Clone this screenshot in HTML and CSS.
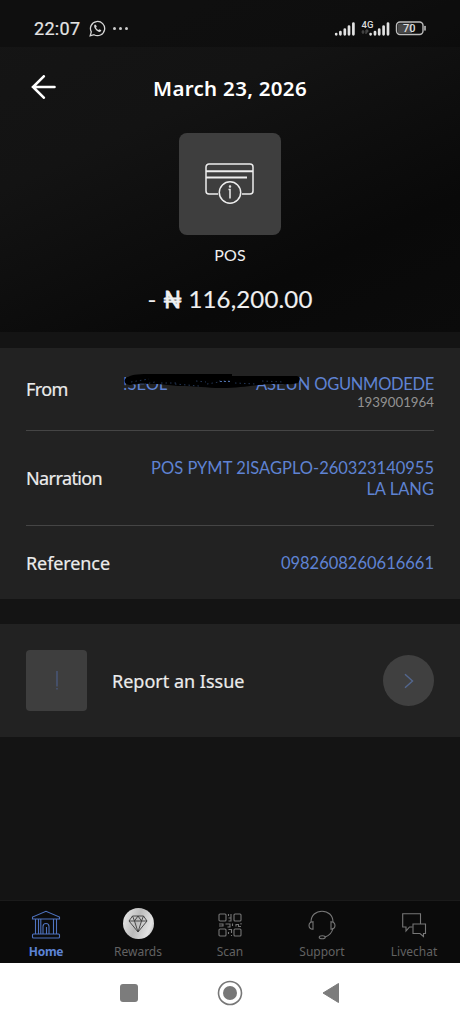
FILE: index.html
```html
<!DOCTYPE html>
<html lang="en">
<head>
<meta charset="utf-8">
<title>Transaction details</title>
<link rel="stylesheet" href="styles.css">
</head>
<body>
<div class="screen">
  <section class="top">
    <div class="status">
      <span class="clock">22:07</span>
      <svg class="whatsapp" width="17" height="17" viewBox="0 0 17 17" fill="none" stroke="#d6d6d6" stroke-width="1.3"><path d="M1.2 15.8l1.1-3.9A7.1 7.1 0 1 1 5 14.7z"/><path d="M5.5 4.8c-1.7 2.2 2.8 7.9 5.9 7l1-1.5-2-1.1-1 .8c-1.2-.4-2-1.4-2.4-2.4l.8-.9-.9-2z" fill="#d6d6d6" stroke="none"/></svg>
      <span class="dots"><i></i><i></i><i></i></span>
      <svg class="signals" width="93" height="20" viewBox="0 0 93 20">
        <g fill="none" stroke="#e2e2e2" stroke-width="2.7" stroke-linecap="round"><path d="M2.2 15v.3M6.4 13v2.3M10.8 10.5v4.8M15 7.5v7.8M19.4 4.5v10.8"/><path d="M36.6 15v.3M41 13v2.3M45.2 10.5v4.8M49.6 7.5v7.8M54 4.5v10.8"/></g>
        <text class="net" x="27.5" y="8.5">4G</text>
        <path d="M29 11v4M27.5 13h3M32 15v-4h1.800v2H32" stroke="#555" fill="none"/>
        <rect x="62.5" y="3" width="26.5" height="12.5" rx="3.5" fill="none" stroke="#bdbdbd" stroke-width="1.4"/>
        <path d="M64 4.5h14v9.500H64z" fill="#484848"/>
        <path d="M91 7.5v3.5" stroke="#bdbdbd" stroke-width="1.6" stroke-linecap="round"/>
        <text class="charge" x="69" y="13.3">70</text>
      </svg>
    </div>
    <header class="title">
      <svg width="25" height="24" viewBox="0 0 25 24" fill="none" stroke="#fff" stroke-width="2.6" stroke-linecap="round"><path d="M12.800 1.300L2 12l10.800 10.700M2 12h21.500"/></svg>
      <h1>March 23, 2026</h1>
    </header>
    <div class="tile">
      <svg width="50" height="42" viewBox="0 0 50 42" fill="none" stroke="#ededed" stroke-width="1.5"><path d="M13 31H4a3 3 0 0 1-3-3V4a3 3 0 0 1 3-3h41a3 3 0 0 1 3 3v24a3 3 0 0 1-3 3h-8"/><path d="M1 8.300h47M1 14.600h41" stroke-width="2"/><circle cx="25" cy="29.5" r="10.7"/><path d="M23.500 26.500H25v9"/><circle cx="25" cy="23.5" r=".5"/></svg>
    </div>
    <p class="kind">POS</p>
    <p class="amount"><span>-</span> <span class="naira">₦</span> <span>116,200.00</span></p>
  </section>

  <section class="details">
    <div class="row from">
      <span class="label l-from">From</span>
      <div class="value">
        <p class="name"><span class="lead">!SEOL</span><span class="given">ASEUN</span> <span class="family">OGUNMODEDE</span>
          <svg class="scribble" width="180" height="20" viewBox="0 0 180 20"><path d="M5 3c5-3 12-3 24-3h80v2h65c4 1 3 4 1 7-6 2-15 1-30 1-15 1-26 4-47 4-15 0-24-2-43-2l-20-2c-10 0-18-1-28 1-6 0-7-5-3-8z" fill="#000"/><path d="M8 8l18-3M17 11l15-3M38 9h18M52 10l24 2M73 7l10 1M84 10l12-2M96 7h13M112 9l21 1M139 7l22 1" stroke="#243655" stroke-dasharray="1.5 3" fill="none"/><path d="M97 7.500h12" stroke="#4d6ea8" stroke-dasharray="2 2"/></svg>
        </p>
        <p class="account">1939001964</p>
      </div>
    </div>
    <div class="row narration">
      <span class="label l-narr">Narration</span>
      <p class="value"><span class="n1">POS PYMT 2ISAGPLO-260323140955</span><br><span class="n2">LA LANG</span></p>
    </div>
    <div class="row reference">
      <span class="label l-ref">Reference</span>
      <p class="value ref">0982608260616661</p>
    </div>
  </section>

  <section class="report">
    <div class="alert"><svg width="4" height="22" viewBox="0 0 4 22"><path d="M2 1v15.500M2 18v1.500" stroke="#4a5a80" stroke-width="1.3"/></svg></div>
    <span class="label l-report">Report an Issue</span>
    <div class="go"><svg width="10" height="16" viewBox="0 0 10 16" fill="none" stroke="#53678f" stroke-width="1.4"><path d="M1 1.200l7.500 6.800L1 14.800"/></svg></div>
  </section>

  <nav class="tabs">
    <div class="tab active">
      <span class="icon"><svg width="30" height="30" viewBox="0 0 30 30" fill="none" stroke="#4f73bf" stroke-width="1.1"><path d="M1.500 9V7L15 1.300 28.500 7v2zM4.500 9v15M7.500 9v15M22.500 9v15M25.500 9v15M9.800 9v15M12 24v-7.500a3 3 0 0 1 6 0V24M15.500 17v7"/><rect x="1.5" y="24" width="27" height="4" rx="1"/></svg></span>
      <span class="t-home">Home</span>
    </div>
    <div class="tab">
      <span class="icon"><span class="coin"><svg width="20" height="18" viewBox="0 0 20 18" fill="none" stroke="#3c3c3c" stroke-width=".9"><path d="M4.500 1h11L19 6l-9 11L1 6zM1 6h18M4.500 1l2 5L10 17l3.500-11 2-5M6.500 6L10 1l3.500 5"/></svg></span></span>
      <span class="t-rewards">Rewards</span>
    </div>
    <div class="tab">
      <span class="icon"><svg width="24" height="24" viewBox="0 0 24 24" fill="none" stroke="#777" stroke-width="1.1"><rect x="1" y="1" width="7" height="7" rx="1"/><rect x="16" y="1" width="7" height="7" rx="1"/><rect x="1" y="16" width="7" height="7" rx="1"/><rect x="16" y="16" width="7" height="7" rx="1"/><path d="M10.500 1v2M10.500 5H13V1M13 5v3h-2.500M1 11h4v2H1M7.500 11H12v3H9.500M14.500 10.500V13M18 13.500v-2h2.500v2H23M23 10v1.500M10.500 16.500h3M13.500 16v4M10.500 19V21M13.500 22v1"/></svg></span>
      <span class="t-scan">Scan</span>
    </div>
    <div class="tab">
      <span class="icon"><svg width="28" height="30" viewBox="0 0 28 30" fill="none" stroke="#777" stroke-width="1.1"><path d="M3 12C3 5 8 1.200 14 1.200S25 5 25 12M25 18c-.8 4.500-3.500 7.500-8 9"/><path d="M5 11.700v7.500c-5.300-.3-5.300-7.200 0-7.500zM23 11.700v7.500c5.300-.3 5.300-7.200 0-7.500z"/><ellipse cx="14.2" cy="27.3" rx="3" ry="1.5"/></svg></span>
      <span class="t-support">Support</span>
    </div>
    <div class="tab">
      <span class="icon"><svg width="26" height="26" viewBox="0 0 26 26" fill="none" stroke="#777" stroke-width="1.1"><path d="M11.500 15H8.500L5 19v-4H1.700V1.700h17.800V12"/><path d="M12 12h12.500v9.500h-2v3l-3.500-3h-7z"/></svg></span>
      <span class="t-live">Livechat</span>
    </div>
  </nav>
  <footer class="system">
    <svg width="18" height="18"><rect width="18" height="18" rx="3" fill="#7c7c7c"/></svg>
    <svg width="26" height="26" fill="none" stroke="#777"><circle cx="13" cy="13" r="11.5" stroke-width="1.6"/><circle cx="13" cy="13" r="7" fill="#777" stroke="none"/></svg>
    <svg width="18" height="22"><path d="M1 11L16.500 1.500v19z" fill="#7c7c7c" stroke="#7c7c7c" stroke-linejoin="round"/></svg>
  </footer>
</div>
</body>
</html>
```
FILE: styles.css
```css
* { box-sizing: border-box; }
body { margin: 0; background: #141414; color: #f0f0f0; font-family: Lato, "Noto Sans", sans-serif; }
p, h1 { margin: 0; white-space: nowrap; }
svg { display: block; flex: none; }
span { white-space: nowrap; }
.screen { width: 460px; height: 1024px; display: flex; flex-direction: column; overflow: hidden; background: #141414; }

.top { height: 332px; flex: none; display: flex; flex-direction: column; align-items: center; background: linear-gradient(155deg, #151515 0%, #131313 35%, #090909 75%, #0b0b0b 100%); }
.status { width: 100%; height: 47px; padding: 10px 33px 0 34px; display: flex; align-items: center; background: rgba(5, 5, 5, .35); }
.clock { width: 55px; font: 400 18px/20px Roboto, sans-serif; letter-spacing: .3px; color: #e4e4e4; -webkit-text-stroke: .2px; }
.dots { display: flex; gap: 3px; margin: 0 auto 0 7px; }
.dots i { width: 3px; height: 3px; border-radius: 50%; background: #ccc; }
.net { font: 500 9.5px Roboto, sans-serif; fill: #ddd; }
.charge { font: 500 11px Roboto, sans-serif; fill: #ddd; }
.title { width: 100%; height: 80px; padding: 2px 31px 0; display: grid; grid-template-columns: 25px 1fr 25px; align-items: center; }
.title svg { margin-top: -2px; }
.title h1 { text-align: center; font: 600 20.5px/28px "Noto Sans", sans-serif; letter-spacing: .3px; color: #fff; }
.tile { width: 102px; height: 102px; margin-top: 6px; border-radius: 8px; background: #3e3e3e; display: grid; place-items: center; flex: none; }
.kind { margin-top: 9px; font-size: 16px; line-height: 22px; letter-spacing: .2px; }
.amount { margin-top: 18px; font-size: 24px; line-height: 30px; letter-spacing: .15px; -webkit-text-stroke: .15px; }
.naira { -webkit-text-stroke: .8px; }

.details { height: 251px; flex: none; margin-top: 16px; padding: 0 26px; background: #222; }
.row { display: flex; justify-content: space-between; align-items: center; }
.from { height: 83px; border-bottom: 1.5px solid #454545; }
.narration { height: 95px; border-bottom: 1.5px solid #454545; }
.reference { height: 73px; }
.label { font: 400 18px/24px "Noto Sans", sans-serif; color: #ececec; -webkit-text-stroke: .2px; }
.l-from { letter-spacing: -.6px; }
.l-narr { letter-spacing: -.6px; }
.l-ref { letter-spacing: -.1px; }
.value { text-align: right; color: #5f83d3; font-size: 16.5px; line-height: 21px; margin-top: 2px; }
.from .value { margin-top: 7px; }
.name { position: relative; width: 311px; display: flex; line-height: 20px; font-size: 16.5px; }
.lead { margin-right: auto; }
.family { margin-left: 4px; letter-spacing: -.3px; }
.scribble { position: absolute; left: 0; top: 0; }
.account { color: #929292; font-size: 13.3px; line-height: 17px; }

.report { height: 113px; flex: none; margin-top: 25px; padding: 0 26px; display: flex; align-items: center; background: #222; }
.alert { width: 61px; height: 61px; border-radius: 4px; background: #3e3e3e; display: grid; place-items: center; }
.l-report { margin: 1px auto 0 25px; }
.go { width: 51px; height: 51px; border-radius: 50%; background: #404040; display: grid; place-items: center; }

.tabs { height: 63px; flex: none; margin-top: auto; display: grid; grid-template-columns: repeat(5, 92px); background: #0b0b0b; border-top: 1px solid #1b1b1b; }
.tab { display: flex; flex-direction: column; align-items: center; font: 12px/16px "Noto Sans", sans-serif; color: #626262; }
.icon { height: 42px; margin-top: 3px; display: grid; place-items: center; }
.tab > span:last-child { margin-top: -2px; }
.active { color: #5c83d6; font-weight: 700; }
.t-home { letter-spacing: -.3px; }
.coin { width: 31px; height: 31px; margin-top: -3px; border-radius: 50%; display: grid; place-items: center; background: linear-gradient(110deg, #eee, #bbb 45%, #e3e3e3 80%, #aaa); }
.system { height: 61px; flex: none; padding: 0 120px 2px; display: flex; align-items: center; justify-content: space-between; background: #fff; }
```
